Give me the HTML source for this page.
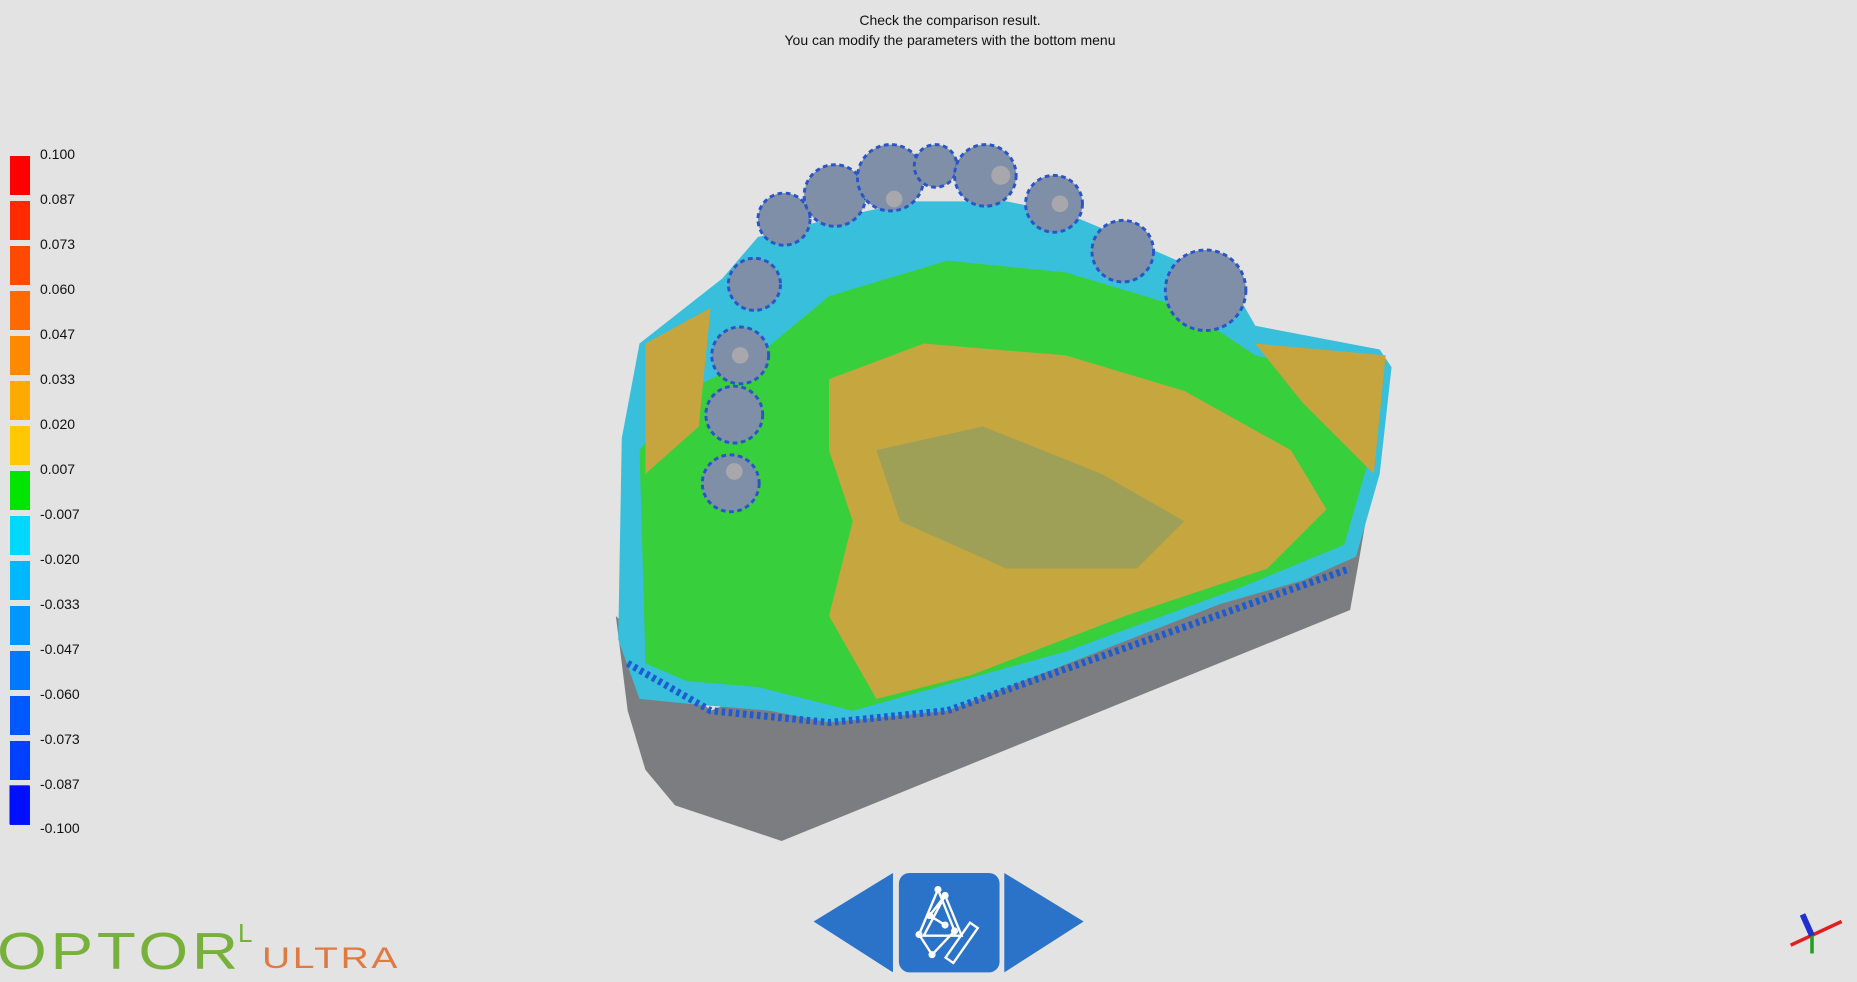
<!DOCTYPE html>
<html><head><meta charset="utf-8"><style>
html,body{margin:0;padding:0;}
body{width:1857px;height:982px;background:#e3e3e3;position:relative;overflow:hidden;font-family:"Liberation Sans",sans-serif;color:#111;}
.top{position:absolute;left:0;width:1900px;text-align:center;font-size:14px;}
.bar{position:absolute;left:10px;width:20px;height:39px;}
.lab{position:absolute;left:40px;font-size:14px;}
</style></head><body>
<div class="top" style="top:12px;">Check the comparison result.</div>
<div class="top" style="top:32px;">You can modify the parameters with the bottom menu</div>

<div class="bar" style="top:156px;background:#ff0000"></div><div class="lab" style="top:146px">0.100</div>
<div class="bar" style="top:201px;background:#ff2a00"></div><div class="lab" style="top:191px">0.087</div>
<div class="bar" style="top:246px;background:#ff4a00"></div><div class="lab" style="top:236px">0.073</div>
<div class="bar" style="top:291px;background:#ff6a00"></div><div class="lab" style="top:281px">0.060</div>
<div class="bar" style="top:336px;background:#ff8a00"></div><div class="lab" style="top:326px">0.047</div>
<div class="bar" style="top:381px;background:#ffaa00"></div><div class="lab" style="top:371px">0.033</div>
<div class="bar" style="top:426px;background:#ffc800"></div><div class="lab" style="top:416px">0.020</div>
<div class="bar" style="top:471px;background:#00e400"></div><div class="lab" style="top:461px">0.007</div>
<div class="bar" style="top:516px;background:#00d8ff"></div><div class="lab" style="top:506px">-0.007</div>
<div class="bar" style="top:561px;background:#00b8ff"></div><div class="lab" style="top:551px">-0.020</div>
<div class="bar" style="top:606px;background:#0098ff"></div><div class="lab" style="top:596px">-0.033</div>
<div class="bar" style="top:651px;background:#0078ff"></div><div class="lab" style="top:641px">-0.047</div>
<div class="bar" style="top:696px;background:#0058ff"></div><div class="lab" style="top:686px">-0.060</div>
<div class="bar" style="top:741px;background:#0040ff"></div><div class="lab" style="top:731px">-0.073</div>
<div class="bar" style="top:786px;background:#0028ff"></div><div class="lab" style="top:776px">-0.087</div>
<div class="lab" style="top:820px">-0.100</div>

<svg style="position:absolute;left:0;top:0" width="1857" height="982" viewBox="0 0 1568 829">
 <rect x="8" y="663" width="17" height="33" fill="#0010ff"/>
 <path d="M520,520 L530,600 L545,650 L570,680 L660,710 L1140,515 L1148,470 L1160,400 L1030,440 L700,560 L600,600 Z" fill="#7c7d80"/>
 <path d="M522,540 L525,370 L540,290 L610,235 L640,200 L700,185 L770,170 L850,170 L900,180 L960,205 L1040,240 L1060,275 L1165,295 L1175,310 L1165,400 L1145,470 L1100,490 L1030,510 L800,600 L700,610 L650,600 L590,595 L540,590 Z" fill="#38bfdc"/>
 <path d="M545,560 L540,380 L580,330 L640,300 L700,250 L800,220 L900,230 L1000,260 L1060,300 L1150,320 L1158,380 L1135,460 L1050,495 L900,550 L720,600 L640,580 L580,575 Z" fill="#38cf3c"/>
 <path d="M700,320 L780,290 L900,300 L1000,330 L1090,380 L1120,430 L1070,480 L950,520 L820,570 L740,590 L700,520 L720,440 L700,380 Z" fill="#c6a63e"/>
 <path d="M740,380 L830,360 L930,400 L1000,440 L960,480 L850,480 L760,440 Z" fill="#8f9e62" opacity="0.7"/>
 <path d="M1060,290 L1170,300 L1160,400 L1100,340 Z" fill="#c6a43e"/>
 <path d="M545,290 L600,260 L590,360 L545,400 Z" fill="#c7a53e"/>
 <path d="M530,560 L600,600 L700,610 L800,600 L1140,480" stroke="#1e5ad0" stroke-width="6" fill="none" stroke-dasharray="3 3"/>
 <g fill="#7f8fa8" stroke="#2a55c8" stroke-width="2.5" stroke-dasharray="4 3">
  <circle cx="637" cy="240" r="22"/><circle cx="625" cy="300" r="24"/><circle cx="620" cy="350" r="24"/><circle cx="617" cy="408" r="24"/>
  <circle cx="662" cy="185" r="22"/><circle cx="705" cy="165" r="26"/><circle cx="752" cy="150" r="28"/><circle cx="790" cy="140" r="18"/><circle cx="832" cy="148" r="26"/>
  <circle cx="890" cy="172" r="24"/><circle cx="948" cy="212" r="26"/><circle cx="1018" cy="245" r="34"/>
 </g>
 <g fill="#a8a8ac"><circle cx="845" cy="148" r="8"/><circle cx="895" cy="172" r="7"/><circle cx="755" cy="168" r="7"/><circle cx="620" cy="398" r="7"/><circle cx="625" cy="300" r="7"/></g>
 <polygon points="687,778 754,737 754,821" fill="#2a73c8"/>
 <rect x="759" y="737" width="85" height="84" rx="9" fill="#2a73c8"/>
 <polygon points="915,778 848,737 848,821" fill="#2a73c8"/>
 <g stroke="#fff" stroke-width="2" fill="none">
  <path d="M792,751 L776,789 L787,806 M792,751 L806,786 L787,806 M798,756 L785,773 M798,756 L812,790 L780,790 Z M785,773 L798,781"/>
  <rect x="808" y="778" width="8" height="36" transform="rotate(35 812 796)"/>
 </g>
 <g fill="#fff"><circle cx="792" cy="751" r="3"/><circle cx="798" cy="756" r="3"/><circle cx="785" cy="773" r="3"/><circle cx="798" cy="781" r="3"/><circle cx="806" cy="786" r="3"/><circle cx="776" cy="789" r="3"/><circle cx="787" cy="806" r="3"/></g>
 <line x1="1512" y1="798" x2="1555" y2="778" stroke="#e02020" stroke-width="3"/>
 <line x1="1530" y1="790" x2="1530" y2="805" stroke="#20a020" stroke-width="3"/>
 <line x1="1522" y1="772" x2="1530" y2="790" stroke="#2030d0" stroke-width="5"/>
</svg>

<div style="position:absolute;left:-3px;top:922px;font-size:52px;color:#77b03a;letter-spacing:3px;line-height:60px;transform:scaleX(1.23);transform-origin:0 0;">OPTOR</div>
<div style="position:absolute;left:238px;top:918px;font-size:26px;color:#77b03a;line-height:30px;">L</div>
<div style="position:absolute;left:262px;top:939px;font-size:30px;color:#e07a43;letter-spacing:2px;line-height:40px;transform:scaleX(1.3);transform-origin:0 0;">ULTRA</div>
</body></html>
